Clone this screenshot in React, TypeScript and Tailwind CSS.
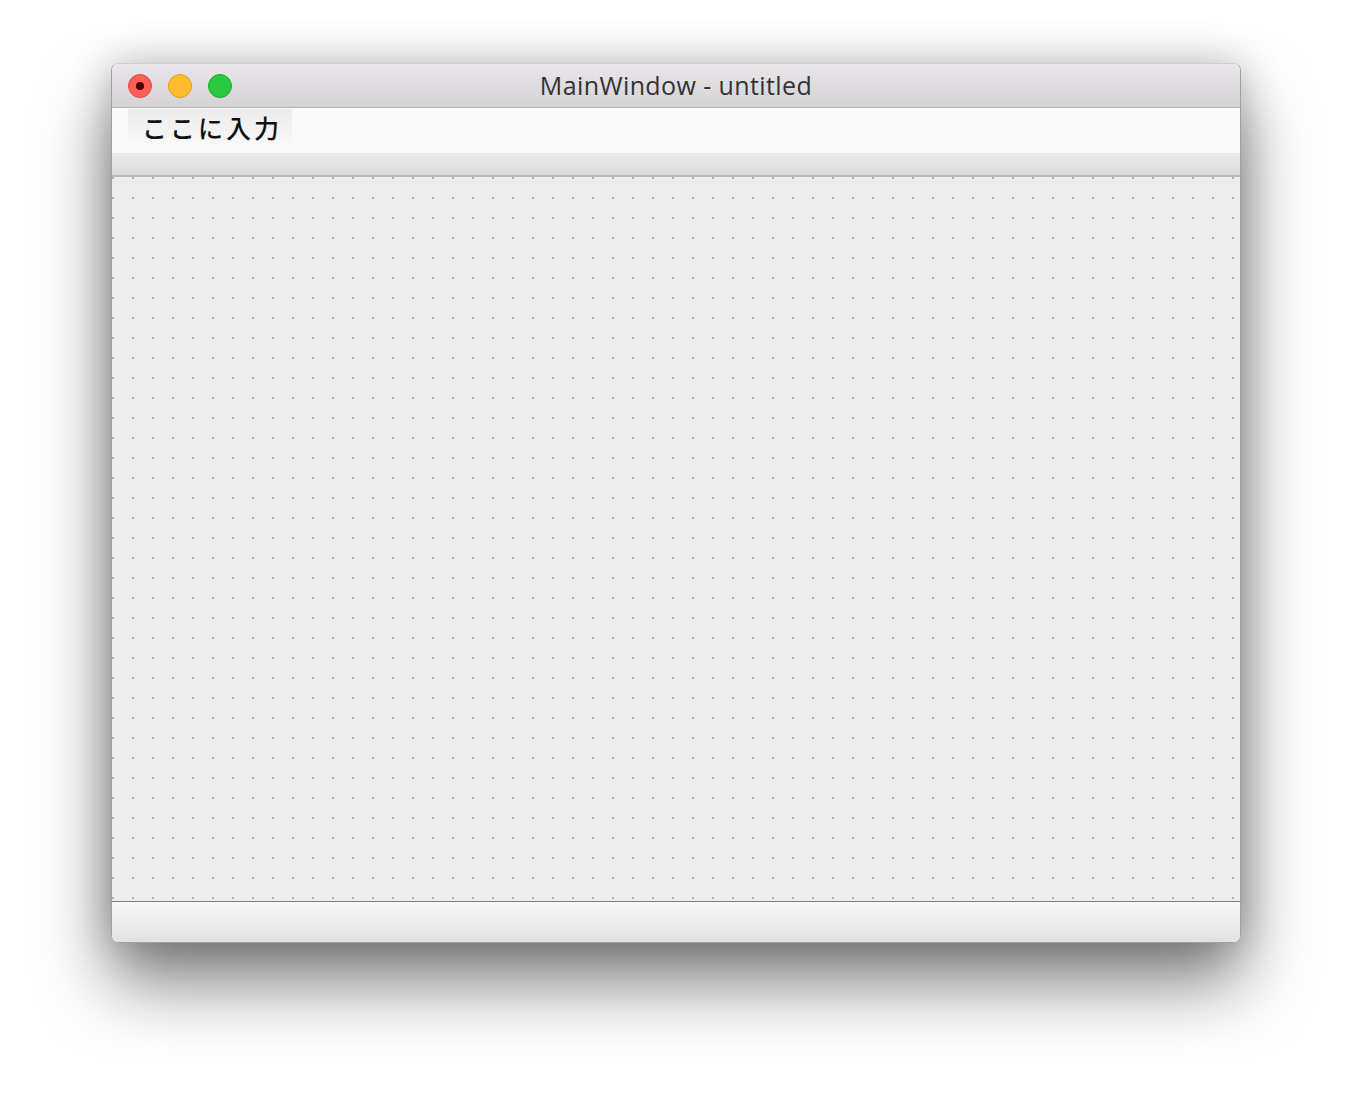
import React from 'react';

const TrafficLights: React.FC = () => (
  <div className="flex items-center gap-4">
    <div className="w-6 h-6 rounded-full bg-[#fe5f57] border border-[#e2463f] flex items-center justify-center">
      <div className="w-2 h-2 rounded-full bg-[#4d0000]" />
    </div>
    <div className="w-6 h-6 rounded-full bg-[#febc2e] border border-[#e1a116]" />
    <div className="w-6 h-6 rounded-full bg-[#28c840] border border-[#1aab29]" />
  </div>
);

export default function App() {
  return (
    <div className="w-[1352px] h-[1102px] bg-white pt-[63px] pl-[111px]">
      <div className="w-[1130px] h-[880px] flex flex-col rounded-[7px] overflow-hidden border border-[#a0a0a0] border-t-[#cfcfcf] shadow-[0_40px_70px_rgba(0,0,0,0.5),0_0_40px_rgba(0,0,0,0.22)]">
        {/* title bar */}
        <div className="relative h-[44px] shrink-0 flex items-center px-4 bg-gradient-to-b from-[#e9e7e9] to-[#d4d2d4] border-b border-[#b3b3b3]">
          <TrafficLights />
          <div className="absolute inset-0 flex items-center justify-center font-['Open_Sans',sans-serif] text-[25px] tracking-[0.4px] text-[#333]">
            MainWindow - untitled
          </div>
        </div>

        {/* menu bar */}
        <div className="h-[45px] shrink-0 bg-[#fafafa] px-4 pt-[1px]">
          <div className="w-[164px] h-[38px] flex items-center pl-[14px] bg-gradient-to-b from-[#ececec] via-[#f2f2f2] to-[#fafafa] font-['Noto_Sans_CJK_JP',sans-serif] font-medium text-[25px] tracking-[3px] text-[#111]">
            ここに入力
          </div>
        </div>

        {/* toolbar area */}
        <div className="h-[24px] shrink-0 bg-gradient-to-b from-[#ececec] to-[#d9d9d9] border-b-2 border-[#b9b9b9]" />

        {/* central widget with grid dots */}
        <div className="flex-1 bg-[#ececec] bg-[radial-gradient(circle_at_1px_1px,#b3b3b3_1px,transparent_1.4px)] bg-[size:20px_20px] border-b border-[#7f7f7f]" />

        {/* status bar */}
        <div className="h-[40px] shrink-0 bg-gradient-to-b from-[#f8f8f8] to-[#e2e2e2]" />
      </div>
    </div>
  );
}
